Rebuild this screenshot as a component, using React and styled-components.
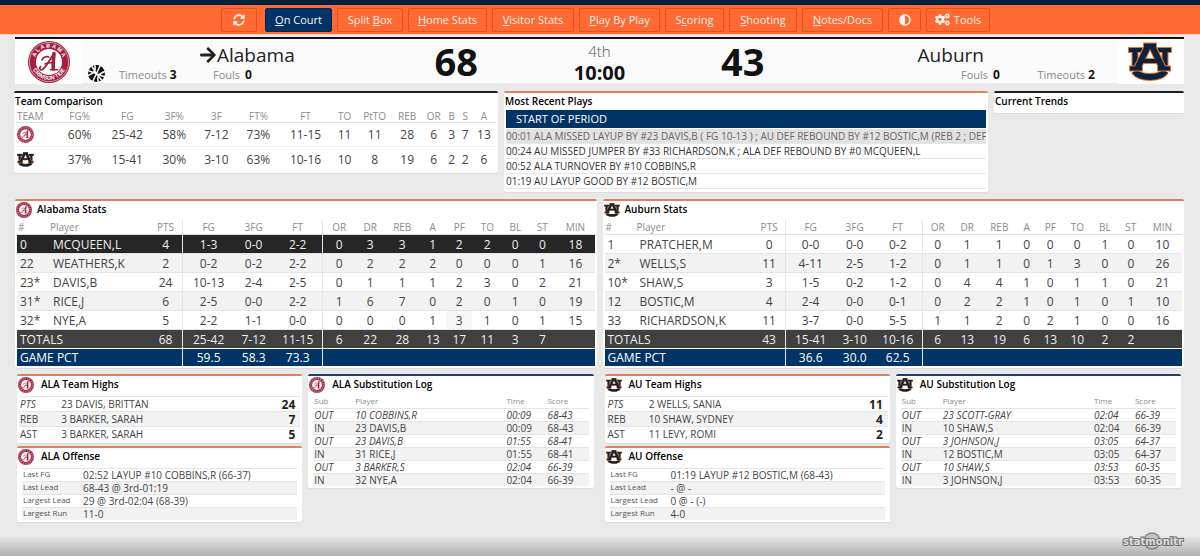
import React from "react";
import styled, { createGlobalStyle } from "styled-components";
import { FaSyncAlt, FaAdjust, FaCogs, FaArrowRight } from "react-icons/fa";

const GlobalStyle = createGlobalStyle`
    * {
        box-sizing: border-box;
    }

    body {
        margin: 0;
        background-color: #e9e9e9;
        font-family: "Open Sans", "Noto Sans", sans-serif;
        color: #444;
    }
`;

const Page = styled.div`
    // size
    min-height: 100vh;

    // display
    display: flex;
    flex-direction: column;
`;

const Navbar = styled.nav`
    // border
    border-top: 5px solid #04203d;
    border-bottom: 1px solid #f6cdbd;

    // sizing & placement
    height: 35px;
    padding-left: 11px;

    // background
    background-color: #ff6933;

    // display
    display: flex;
    justify-content: center;
    align-items: center;
    gap: 5px;
`;

const NavButton = styled.button`
    // border
    border: 1px solid ${(p) => (p.$active ? "#0a2447" : "#e8501c")};
    border-radius: 2px;

    // sizing & placement
    width: ${(p) => p.$width}px;
    height: 24px;
    padding: 0;
    margin-right: ${(p) => (p.$apart ? 3 : 0)}px;

    // background
    background-color: ${(p) => (p.$active ? "#003366" : "transparent")};

    // display
    display: flex;
    justify-content: center;
    align-items: center;
    gap: 4px;

    // text
    color: #fff4ec;
    font-family: inherit;
    font-size: 11px;
    white-space: nowrap;
`;

const Main = styled.main`
    // sizing & placement
    padding: 2px 16px 0 15px;
`;

const Scoreboard = styled.header`
    // border
    border-top: 2px solid #111;

    // sizing & placement
    height: 46px;
    margin-bottom: 8px;

    // background
    background-color: #fafafa;

    // display
    display: grid;
    grid-template-columns: 67px 302fr 143fr 143fr 143fr 302fr 67px;
`;

const LogoBox = styled.div`
    background-color: #fff;
    display: flex;
    justify-content: center;
    align-items: center;
`;

const HomeTeam = styled.div`
    padding-left: 6px;
    display: grid;
    grid-template-columns: 31px 80px 1fr;
    grid-template-rows: 26px 16px;
    align-items: center;
`;

const AwayTeam = styled.div`
    padding-right: 22px;
    display: grid;
    grid-template-columns: 1fr 95px;
    grid-template-rows: 26px 16px;
    align-items: center;
    justify-items: end;
`;

const TeamName = styled.div`
    // placement
    grid-column: ${(p) => p.$column};
    padding-right: ${(p) => (p.$away ? 16 : 0)}px;
    padding-top: 6px;

    // display
    display: flex;
    align-items: center;

    // text
    color: #222;
    font-size: 19px;
    line-height: 26px;
`;

const TeamFact = styled.div`
    padding-left: ${(p) => (p.$indent ? 14 : 0)}px;
    padding-top: 4px;
    display: flex;
    align-items: center;
    gap: ${(p) => p.$gap || 3}px;
    color: #8a8a8a;
    font-size: 11px;
    line-height: 16px;

    b {
        color: #111;
        font-size: 12px;
    }
`;

const BallMark = styled.div`
    grid-column: 1;
    display: flex;
`;

const Score = styled.div`
    text-align: center;
    color: #111;
    font-size: 38px;
    font-weight: 700;
    line-height: 45px;
`;

const Clock = styled.div`
    text-align: center;
    color: #555;
    font-size: 15px;
    font-weight: 300;
    line-height: 24px;

    b {
        display: block;
        color: #111;
        font-size: 20px;
        font-weight: 700;
        line-height: 20px;
    }
`;

const TopRow = styled.div`
    margin: 0 0 7px -1px;
    display: grid;
    grid-template-columns: 484fr 484fr 190fr;
    gap: 6px;
    align-items: start;
`;

const StatsRow = styled.div`
    display: grid;
    grid-template-columns: 1fr 1fr;
    gap: 6px;
    align-items: start;
`;

const LogRow = styled.div`
    padding: 6px 3px 0 2px;
    display: grid;
    grid-template-columns: 1fr 1fr;
    gap: 6px;
    align-items: start;
`;

const Stack = styled.div`
    display: flex;
    flex-direction: column;
    gap: 3px;
`;

const accents = {
    dark: "#1d1f24",
    orange: "#e0805c",
    navy: "#1f3f6b",
};

const Card = styled.section`
    // border
    border-top: 2px solid ${(p) => accents[p.$accent]};
    border-radius: 2px;

    // sizing & placement
    min-width: 0;
    padding: 0 ${(p) => p.$pad || 2}px 2px;

    // background
    background-color: #fff;
    box-shadow: 0 1px 1px rgba(0, 0, 0, 0.06);
`;

const CardTitle = styled.h2`
    // sizing & placement
    height: ${(p) => p.$height}px;
    margin: 0 0 0 -${(p) => p.$pull}px;

    // display
    display: flex;
    align-items: flex-start;
    gap: ${(p) => p.$gap || 5}px;

    // text
    color: #000;
    font-size: 10px;
    font-weight: 600;
    line-height: 16px;

    svg {
        flex: none;
        margin-top: 1px;
    }
`;

const Table = styled.table`
    width: 100%;
    table-layout: fixed;
    border-spacing: 0;
    text-align: center;
    white-space: nowrap;

    th,
    td {
        padding: 0;
    }

    th {
        color: #8c8c8c;
        font-weight: 400;
    }
`;

const CompareTable = styled(Table)`
    th {
        height: 14px;
        border-bottom: 1px solid #ddd;
        font-size: 10px;
        line-height: 12px;
    }

    td {
        height: 24px;
        border-bottom: 1px solid #eee;
        font-size: 12px;
    }

    tr:last-child td {
        border-bottom: 0;
    }

    th:first-child,
    td:first-child {
        padding-left: 1px;
        text-align: left;
    }

    svg {
        display: block;
    }
`;

const StatTable = styled(Table)`
    th {
        height: 15px;
        border-bottom: 1px solid #ddd;
        font-size: 10px;
        line-height: 13px;
    }

    td {
        height: 19px;
        border-bottom: 1px solid #e4e4e4;
        font-size: 12px;
        line-height: 17px;
    }

    th:nth-child(1),
    td:nth-child(1) {
        padding-left: 3px;
        text-align: left;
    }

    th:nth-child(1) {
        padding-left: 1px;
    }

    th:nth-child(2) {
        padding-left: 2px;
        text-align: left;
    }

    .name {
        padding-left: 5px;
        text-align: left;
    }

    .rule {
        border-right: 1px solid #e6e6e6;
    }
`;

const StatRow = styled.tr`
    background-color: ${(p) => (p.$picked ? "#262626" : p.$even ? "#f2f2f2" : "#fff")};
    color: ${(p) => (p.$picked ? "#eee" : "#444")};

    .foul-watch {
        background-color: #f7f7f7;
    }
`;

const TotalRow = styled.tr`
    background-color: #404040;
    color: #eee;

    td {
        border-bottom-color: #fff;
    }
`;

const PctRow = styled.tr`
    background-color: #003366;
    color: #fff;

    td {
        height: 17px;
        border-bottom: 0;
    }
`;

const HighTable = styled(Table)`
    text-align: left;

    td {
        height: 15px;
        border-top: 1px solid #e4e4e4;
        font-size: 10px;
        line-height: 13px;
    }

    td:first-child {
        padding-left: 1px;
    }

    td:last-child {
        padding-right: 5px;
        color: #222;
        font-size: 12px;
        font-weight: 700;
        text-align: right;
    }

    tr:nth-child(even) {
        background-color: #f2f2f2;
    }

    tr:first-child td:first-child {
        font-style: italic;
    }
`;

const OffenseTable = styled(Table)`
    text-align: left;

    th,
    td {
        height: 13px;
        border-top: 1px solid #e4e4e4;
        line-height: 12px;
    }

    th {
        padding-left: 1px;
        color: #555;
        font-size: 8px;
        line-height: 10px;
        text-align: left;
        vertical-align: top;
    }

    td {
        font-size: 10px;
        vertical-align: bottom;
    }

    tr:nth-child(even) {
        background-color: #f2f2f2;
    }
`;

const SubTable = styled(Table)`
    text-align: left;

    th {
        height: 12px;
        font-size: 8px;
        line-height: 10px;
        text-align: left;
        vertical-align: top;
    }

    td {
        height: 13px;
        border-top: 1px solid #e4e4e4;
        font-size: 10px;
        line-height: 12px;
    }

    th:first-child,
    td:first-child {
        padding-left: 1px;
    }

    tbody tr:nth-child(odd) {
        font-style: italic;
    }

    tbody tr:nth-child(even) {
        background-color: #f2f2f2;
    }
`;

const PlayPeriod = styled.div`
    height: 18px;
    margin: 0 0 1px;
    padding-left: 10px;
    background-color: #003366;
    color: #fff;
    font-size: 11px;
    line-height: 18px;
`;

const PlayList = styled.ul`
    margin: 0;
    padding: 0 0 1px;
    list-style: none;
`;

const Play = styled.li`
    height: 15px;
    border-bottom: 1px solid #e6e6e6;
    background-color: ${(p) => (p.$latest ? "#e2e2e2" : "#fff")};
    color: ${(p) => (p.$latest ? "#666" : "#333")};
    font-size: 10px;
    line-height: 14px;
    white-space: nowrap;
    overflow: hidden;
`;

const Footer = styled.footer`
    // sizing & placement
    height: 24px;
    margin-top: auto;
    padding: 0 14px;

    // background
    background: linear-gradient(#e9e9e9 15%, #b0b0b0);

    // display
    display: flex;
    justify-content: flex-end;
    align-items: flex-start;
`;

// the lettering round the seal only fits at the large size
const Alabama = ({ size }) => (
    <svg width={size} height={size} viewBox="0 0 42 42" aria-label="Alabama">
        <circle cx="21" cy="21" r="21" fill="#a3213f" />
        <circle cx="21" cy="21" r="19.6" fill="none" stroke="#e9c3cc" strokeWidth="0.7" />
        <circle cx="21" cy="21" r="13" fill="#fff" />
        {size > 20 ? (
            <>
                <path id="ala-top" d="M6.500 21a14.500 14.500 0 0 1 29 0" fill="none" />
                <path id="ala-low" d="M3.200 21a17.800 17.800 0 0 0 35.600 0" fill="none" />
                <g fill="#fff" fontFamily="Liberation Sans" fontWeight="700" textAnchor="middle">
                    <text fontSize="5.5">
                        <textPath href="#ala-top" startOffset="50%">A L A B A M A</textPath>
                    </text>
                    <text fontSize="5.5">
                        <textPath href="#ala-low" startOffset="50%">CRIMSON TIDE</textPath>
                    </text>
                </g>
            </>
        ) : (
            <circle cx="21" cy="21" r="16.500" fill="none" stroke="#d58a9b" strokeWidth="3" strokeDasharray="3 3" />
        )}
        <g fill="none" stroke="#a3213f" strokeLinecap="round">
            <path d="M26 12.500C22 18 19 25 14.500 28.500c-2 1-4-1-2-2.800" strokeWidth="1.800" />
            <path d="M26 12.500c-.6 5-1 10-.8 15.500" strokeWidth="3.600" />
            <path d="M22.500 28.800h7M17 23c3-1.500 6-1.500 9.500-1M14 19c1-3 4-4 7-3" strokeWidth="1.600" />
        </g>
    </svg>
);

const AuburnStrokes = ({ color, grow }) => (
    <g fill="none" stroke={color}>
        <path d="M3 8h9M32 8h9" strokeWidth={4 + grow} strokeLinecap="square" />
        <path d="M7 8v18M37 8v18" strokeWidth={5 + grow} />
        <path d="M6.500 29C12 37 32 37 37.500 29" strokeWidth={6 + grow} />
    </g>
);

const AuburnPeak = ({ color, grow }) => (
    <g fill="none" stroke={color}>
        <path d="M18 3.500h8" strokeWidth={4 + grow} strokeLinecap="square" />
        <path d="M20 4L9 27M24 4l11 23" strokeWidth={6 + grow} />
        <path d="M14 19h16" strokeWidth={4 + grow} />
        <path d="M4 26.500h8M32 26.500h8" strokeWidth={4 + grow} strokeLinecap="square" />
    </g>
);

const Auburn = ({ size }) => (
    <svg width={size} height={size} viewBox="0 -2 44 44" aria-label="Auburn">
        <AuburnStrokes color="#e87722" grow={2} />
        <AuburnStrokes color="#0c2340" grow={0} />
        <AuburnPeak color="#e87722" grow={2} />
        <AuburnPeak color="#0c2340" grow={0} />
    </svg>
);

const Ball = () => (
    <svg width="17" height="17" viewBox="0 0 17 17">
        <circle cx="8.500" cy="8.500" r="8.500" fill="#111" />
        <g fill="none" stroke="#fafafa" strokeWidth="1.500">
            <path d="M12.500 0L4.500 17M0 5.500l17 6.500M6.500 0Q9.500 7 0 10.500M17 6.500Q7.500 9.500 10.500 17M4 1.500l4 6.500 6 7.500" />
        </g>
    </svg>
);

const logos = { ala: Alabama, au: Auburn };

const navItems = [
    { label: <FaSyncAlt size={12} />, name: "Refresh", width: 36, apart: true },
    { label: <span><u>O</u>n Court</span>, width: 67, active: true },
    { label: <span>Split <u>B</u>ox</span>, width: 66 },
    { label: <span><u>H</u>ome Stats</span>, width: 79 },
    { label: <span><u>V</u>isitor Stats</span>, width: 82 },
    { label: <span><u>P</u>lay By Play</span>, width: 81 },
    { label: <span>S<u>c</u>oring</span>, width: 59 },
    { label: <span><u>S</u>hooting</span>, width: 68 },
    { label: <span><u>N</u>otes/Docs</span>, width: 81 },
    { label: <FaAdjust size={12} />, name: "Contrast", width: 33 },
    { label: <><FaCogs size={15} />Tools</>, width: 64 },
];

const compareHead = ["TEAM", "FG%", "FG", "3F%", "3F", "FT%", "FT", "TO", "PtTO", "REB", "OR", "B", "S", "A"];
const compareCols = [42, 43, 52, 42, 42, 42, 52, 26, 34, 31, 22, 14, 13, 24];
const compareRows = [
    ["ala", "60%", "25-42", "58%", "7-12", "73%", "11-15", 11, 11, 28, 6, 3, 7, 13],
    ["au", "37%", "15-41", "30%", "3-10", "63%", "10-16", 10, 8, 19, 6, 2, 2, 6],
];

const plays = [
    "00:01 ALA MISSED LAYUP BY #23 DAVIS,B ( FG 10-13 ) ; AU DEF REBOUND BY #12 BOSTIC,M (REB 2 ; DEF",
    "00:24 AU MISSED JUMPER BY #33 RICHARDSON,K ; ALA DEF REBOUND BY #0 MCQUEEN,L",
    "00:52 ALA TURNOVER BY #10 COBBINS,R",
    "01:19 AU LAYUP GOOD BY #12 BOSTIC,M",
];

const statHead = ["#", "Player", "PTS", "FG", "3FG", "FT", "OR", "DR", "REB", "A", "PF", "TO", "BL", "ST", "MIN"];

const teams = [
    {
        id: "ala",
        name: "Alabama",
        short: "ALA",
        cols: [31, 101, 34, 51, 39, 50, 32, 30, 34, 27, 26, 30, 26, 28, 38],
        picked: "0",
        players: [
            ["0", "MCQUEEN,L", 4, "1-3", "0-0", "2-2", 0, 3, 3, 1, 2, 2, 0, 0, 18],
            ["22", "WEATHERS,K", 2, "0-2", "0-2", "2-2", 0, 2, 2, 2, 0, 0, 0, 1, 16],
            ["23*", "DAVIS,B", 24, "10-13", "2-4", "2-5", 0, 1, 1, 1, 2, 3, 0, 2, 21],
            ["31*", "RICE,J", 6, "2-5", "0-0", "2-2", 1, 6, 7, 0, 2, 0, 1, 0, 19],
            ["32*", "NYE,A", 5, "2-2", "1-1", "0-0", 0, 0, 0, 1, 3, 1, 0, 1, 15],
        ],
        totals: [68, "25-42", "7-12", "11-15", 6, 22, 28, 13, 17, 11, 3, 7, ""],
        pct: ["59.5", "58.3", "73.3"],
        highs: [["PTS", "23 DAVIS, BRITTAN", 24], ["REB", "3 BARKER, SARAH", 7], ["AST", "3 BARKER, SARAH", 5]],
        offense: [
            ["Last FG", "02:52 LAYUP #10 COBBINS,R (66-37)"],
            ["Last Lead", "68-43 @ 3rd-01:19"],
            ["Largest Lead", "29 @ 3rd-02:04 (68-39)"],
            ["Largest Run", "11-0"],
        ],
        subs: [
            ["OUT", "10 COBBINS,R", "00:09", "68-43"],
            ["IN", "23 DAVIS,B", "00:09", "68-43"],
            ["OUT", "23 DAVIS,B", "01:55", "68-41"],
            ["IN", "31 RICE,J", "01:55", "68-41"],
            ["OUT", "3 BARKER,S", "02:04", "66-39"],
            ["IN", "32 NYE,A", "02:04", "66-39"],
        ],
    },
    {
        id: "au",
        name: "Auburn",
        short: "AU",
        cols: [30, 119, 32, 50, 38, 49, 30, 29, 35, 20, 27, 27, 28, 24, 39],
        players: [
            ["1", "PRATCHER,M", 0, "0-0", "0-0", "0-2", 0, 1, 1, 0, 0, 0, 1, 0, 10],
            ["2*", "WELLS,S", 11, "4-11", "2-5", "1-2", 0, 1, 1, 0, 1, 3, 0, 0, 26],
            ["10*", "SHAW,S", 3, "1-5", "0-2", "1-2", 0, 4, 4, 1, 0, 1, 1, 0, 21],
            ["12", "BOSTIC,M", 4, "2-4", "0-0", "0-1", 0, 2, 2, 1, 0, 1, 0, 1, 10],
            ["33", "RICHARDSON,K", 11, "3-7", "0-0", "5-5", 1, 1, 2, 0, 2, 1, 0, 0, 16],
        ],
        totals: [43, "15-41", "3-10", "10-16", 6, 13, 19, 6, 13, 10, 2, 2, ""],
        pct: ["36.6", "30.0", "62.5"],
        highs: [["PTS", "2 WELLS, SANIA", 11], ["REB", "10 SHAW, SYDNEY", 4], ["AST", "11 LEVY, ROMI", 2]],
        offense: [
            ["Last FG", "01:19 LAYUP #12 BOSTIC,M (68-43)"],
            ["Last Lead", "- @ -"],
            ["Largest Lead", "0 @ - (-)"],
            ["Largest Run", "4-0"],
        ],
        subs: [
            ["OUT", "23 SCOTT-GRAY", "02:04", "66-39"],
            ["IN", "10 SHAW,S", "02:04", "66-39"],
            ["OUT", "3 JOHNSON,J", "03:05", "64-37"],
            ["IN", "12 BOSTIC,M", "03:05", "64-37"],
            ["OUT", "10 SHAW,S", "03:53", "60-35"],
            ["IN", "3 JOHNSON,J", "03:53", "60-35"],
        ],
    },
];

const Cols = ({ widths }) => (
    <colgroup>
        {widths.map((w, i) => <col key={i} width={w} />)}
    </colgroup>
);

// a vertical rule follows PTS and FT, and three fouls or more get a tint
const cellClass = (i, value) => {
    if (i === 1) return "name";
    if (i === 2 || i === 5) return "rule";
    if (i === 10 && value > 2) return "foul-watch";
    return undefined;
};

function TeamStats({ team }) {
    const Logo = logos[team.id];
    return (
        <Card $accent="orange">
            <CardTitle $height={19} $pull={1}><Logo size={16} />{team.name} Stats</CardTitle>
            <StatTable>
                <Cols widths={team.cols} />
                <thead>
                    <tr>
                        {statHead.map((h, i) => <th key={h} className={i === 1 ? undefined : cellClass(i)}>{h}</th>)}
                    </tr>
                </thead>
                <tbody>
                    {team.players.map((row, r) => (
                        <StatRow key={row[0]} $even={r % 2 === 1} $picked={row[0] === team.picked}>
                            {row.map((cell, i) => <td key={i} className={cellClass(i, cell)}>{cell}</td>)}
                        </StatRow>
                    ))}
                    <TotalRow>
                        <td colSpan={2}>TOTALS</td>
                        {team.totals.map((cell, i) => <td key={i} className={cellClass(i + 2)}>{cell}</td>)}
                    </TotalRow>
                    <PctRow>
                        <td colSpan={3} className="rule">GAME PCT</td>
                        {team.pct.map((cell, i) => <td key={i} className={cellClass(i + 3)}>{cell}</td>)}
                        <td colSpan={9} />
                    </PctRow>
                </tbody>
            </StatTable>
        </Card>
    );
}

function TeamLogs({ team }) {
    const Logo = logos[team.id];
    return (
        <LogRow>
            <Stack>
                <Card $accent="orange">
                    <CardTitle $height={20} $pull={1} $gap={7}><Logo size={16} />{team.short} Team Highs</CardTitle>
                    <HighTable>
                        <Cols widths={[42, 190, 48]} />
                        <tbody>
                            {team.highs.map((row) => (
                                <tr key={row[0]}>
                                    {row.map((cell, i) => <td key={i}>{cell}</td>)}
                                </tr>
                            ))}
                        </tbody>
                    </HighTable>
                </Card>
                <Card $accent="orange" $pad={5}>
                    <CardTitle $height={20} $pull={4} $gap={7}><Logo size={16} />{team.short} Offense</CardTitle>
                    <OffenseTable>
                        <Cols widths={[61, 214]} />
                        <tbody>
                            {team.offense.map((row) => (
                                <tr key={row[0]}>
                                    <th scope="row">{row[0]}</th>
                                    <td>{row[1]}</td>
                                </tr>
                            ))}
                        </tbody>
                    </OffenseTable>
                </Card>
            </Stack>
            <Card $accent="navy" $pad={5}>
                <CardTitle $height={20} $pull={4} $gap={7}><Logo size={16} />{team.short} Substitution Log</CardTitle>
                <SubTable>
                    <Cols widths={[42, 151, 41, 41]} />
                    <thead>
                        <tr>
                            <th>Sub</th>
                            <th>Player</th>
                            <th>Time</th>
                            <th>Score</th>
                        </tr>
                    </thead>
                    <tbody>
                        {team.subs.map((row, r) => (
                            <tr key={r}>
                                {row.map((cell, i) => <td key={i}>{cell}</td>)}
                            </tr>
                        ))}
                    </tbody>
                </SubTable>
            </Card>
        </LogRow>
    );
}

function App() {
    return (
        <Page>
            <GlobalStyle />
            <Navbar>
                {navItems.map((item, i) => (
                    <NavButton key={i} type="button" aria-label={item.name} $width={item.width} $active={item.active} $apart={item.apart}>
                        {item.label}
                    </NavButton>
                ))}
            </Navbar>
            <Main>
                <Scoreboard>
                    <LogoBox><Alabama size={42} /></LogoBox>
                    <HomeTeam>
                        <TeamName $column={3}><FaArrowRight size={18} />Alabama</TeamName>
                        <BallMark><Ball /></BallMark>
                        <TeamFact>Timeouts <b>3</b></TeamFact>
                        <TeamFact $indent $gap={5}>Fouls <b>0</b></TeamFact>
                    </HomeTeam>
                    <Score>68</Score>
                    <Clock>4th<b>10:00</b></Clock>
                    <Score>43</Score>
                    <AwayTeam>
                        <TeamName $column={1} $away>Auburn</TeamName>
                        <span />
                        <TeamFact $gap={5}>Fouls <b>0</b></TeamFact>
                        <TeamFact>Timeouts <b>2</b></TeamFact>
                    </AwayTeam>
                    <LogoBox><Auburn size={44} /></LogoBox>
                </Scoreboard>

                <TopRow>
                    <Card $accent="dark">
                        <CardTitle $height={16} $pull={1}>Team Comparison</CardTitle>
                        <CompareTable>
                            <Cols widths={compareCols} />
                            <thead>
                                <tr>{compareHead.map((h) => <th key={h}>{h}</th>)}</tr>
                            </thead>
                            <tbody>
                                {compareRows.map(([id, ...cells]) => {
                                    const Logo = logos[id];
                                    return (
                                        <tr key={id}>
                                            <td><Logo size={17} /></td>
                                            {cells.map((cell, i) => <td key={i}>{cell}</td>)}
                                        </tr>
                                    );
                                })}
                            </tbody>
                        </CompareTable>
                    </Card>
                    <Card $accent="orange">
                        <CardTitle $height={17} $pull={1}>Most Recent Plays</CardTitle>
                        <PlayPeriod>START OF PERIOD</PlayPeriod>
                        <PlayList>
                            {plays.map((play, i) => <Play key={play} $latest={i === 0}>{play}</Play>)}
                        </PlayList>
                    </Card>
                    <Card $accent="dark">
                        <CardTitle $height={18} $pull={1}>Current Trends</CardTitle>
                    </Card>
                </TopRow>

                <StatsRow>
                    {teams.map((team) => (
                        <div key={team.id}>
                            <TeamStats team={team} />
                            <TeamLogs team={team} />
                        </div>
                    ))}
                </StatsRow>
            </Main>
            <Footer>
                <svg width="66" height="18" viewBox="0 0 66 18" aria-label="statmonitr">
                    <circle cx="32" cy="9" r="8" fill="#c4c4c4" stroke="#888" strokeWidth="1.500" />
                    <text x="33" y="13" fill="#ddd" stroke="#777" strokeWidth="2" paintOrder="stroke" fontFamily="DejaVu Sans" fontWeight="700" fontSize="10" textAnchor="middle">statmonitr</text>
                </svg>
            </Footer>
        </Page>
    );
}

export default App;
